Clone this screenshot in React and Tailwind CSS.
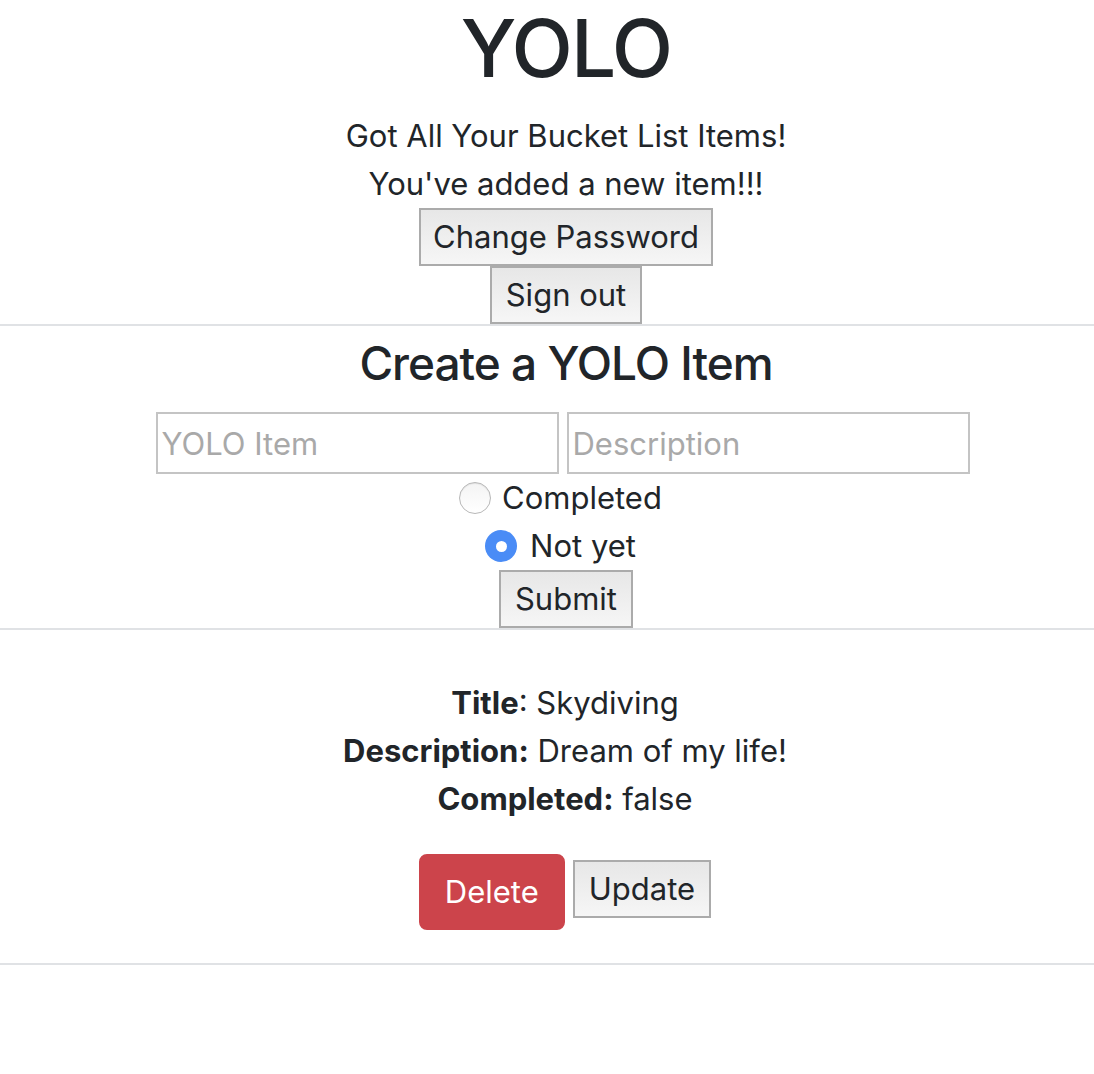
export default function App() {
  const btnBase =
    "inline-block border-2 border-[#ababab] bg-linear-to-b from-[#e7e7e7] to-[#f6f6f6] py-[3px] text-[31px] leading-[48px] text-[#212529]";
  const input =
    "h-[62px] w-[403px] border-2 border-[#c4c4c4] px-[4px] text-[31px] outline-none placeholder:text-[#a9a9a9]";
  return (
    <div className="w-full overflow-hidden bg-white font-['Inter',sans-serif] text-[#212529]">
      <div className="pl-[38px] text-center">
        <h1 className="mb-[16px] text-[80px] font-medium leading-[96px] tracking-[-2px]">YOLO</h1>
        <p className="text-[31px] leading-[48px]">Got All Your Bucket List Items!</p>
        <p className="text-[31px] leading-[48px]">You've added a new item!!!</p>
        <div className="flex justify-center">
          <button className={btnBase + " px-[12px]"}>Change Password</button>
        </div>
        <div className="flex justify-center">
          <button className={btnBase + " px-[14px]"}>Sign out</button>
        </div>
      </div>
      <div className="h-[2px] w-full bg-[#e0e2e5]" />
      <div className="text-center">
        <h3 className="mb-[16px] pt-[4px] pl-[38px] text-[46px] font-medium leading-[66px] tracking-[-1px]">
          Create a YOLO Item
        </h3>
        <div className="flex justify-center gap-[8px] pl-[31px]">
          <input className={input} placeholder="YOLO Item" />
          <input className={input} placeholder="Description" />
        </div>
        <div className="flex h-[48px] items-center justify-center gap-[11px] pl-[27px]">
          <span className="block h-[32px] w-[32px] rounded-full border border-[#b8b8b8] bg-linear-to-b from-[#f4f4f4] to-white shadow-[inset_0_1px_1px_rgba(0,0,0,0.08)]" />
          <span className="text-[31px] leading-[48px]">Completed</span>
        </div>
        <div className="flex h-[48px] items-center justify-center gap-[13px] pl-[27px]">
          <span className="flex h-[32px] w-[32px] items-center justify-center rounded-full bg-[#4a8cf6]">
            <span className="block h-[11px] w-[11px] rounded-full bg-white" />
          </span>
          <span className="text-[31px] leading-[48px]">Not yet</span>
        </div>
        <div className="flex justify-center pl-[38px]">
          <button className={btnBase + " px-[14px]"}>Submit</button>
        </div>
      </div>
      <div className="h-[2px] w-full bg-[#e0e2e5]" />
      <div className="pt-[49px] pb-[33px] pl-[36px] text-center text-[31px] leading-[48px]">
        <p>
          <b className="font-bold">Title</b>: Skydiving
        </p>
        <p>
          <b className="font-bold">Description:</b> Dream of my life!
        </p>
        <p>
          <b className="font-bold">Completed:</b> false
        </p>
        <div className="mt-[31px] flex items-start justify-center gap-[8px]">
          <button className="rounded-[8px] border-2 border-[#cc444b] bg-[#cc444b] px-[24px] py-[12px] text-[31px] leading-[48px] text-white">
            Delete
          </button>
          <button className={btnBase + " mt-[6px] px-[14px]"}>Update</button>
        </div>
      </div>
      <div className="h-[2px] w-full bg-[#e0e2e5]" />
    </div>
  );
}
